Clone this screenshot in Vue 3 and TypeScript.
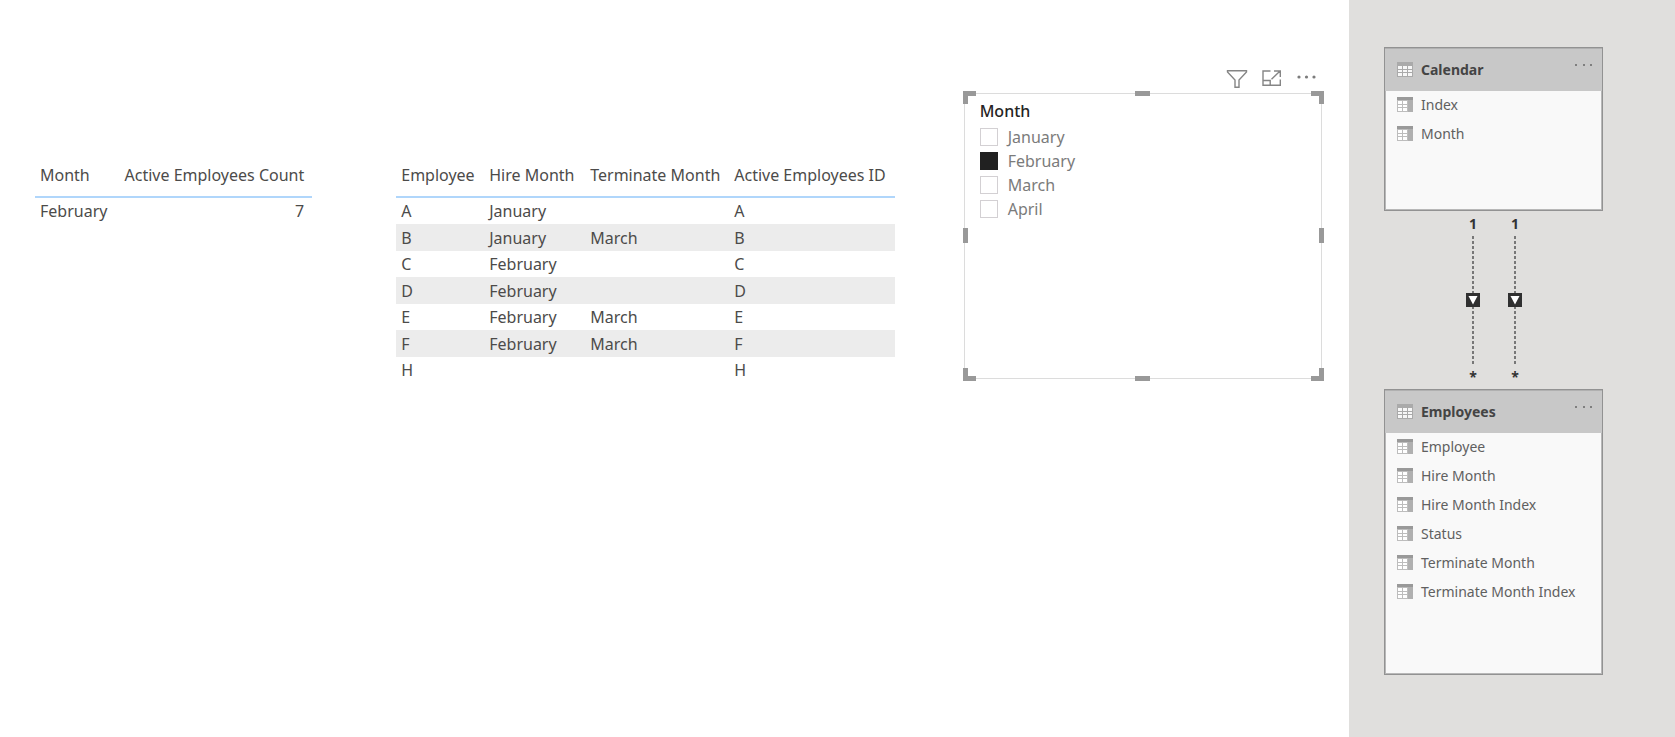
<script setup lang="ts">
import { ref } from 'vue'

interface EmployeeRow {
  employee: string
  hire: string
  terminate: string
  active: string
}

interface ModelTable {
  name: string
  fields: string[]
}

const rows: EmployeeRow[] = [
  { employee: 'A', hire: 'January', terminate: '', active: 'A' },
  { employee: 'B', hire: 'January', terminate: 'March', active: 'B' },
  { employee: 'C', hire: 'February', terminate: '', active: 'C' },
  { employee: 'D', hire: 'February', terminate: '', active: 'D' },
  { employee: 'E', hire: 'February', terminate: 'March', active: 'E' },
  { employee: 'F', hire: 'February', terminate: 'March', active: 'F' },
  { employee: 'H', hire: '', terminate: '', active: 'H' },
]

const months: string[] = ['January', 'February', 'March', 'April']
const selected = ref<string[]>(['February'])

const models: ModelTable[] = [
  { name: 'Calendar', fields: ['Index', 'Month'] },
  {
    name: 'Employees',
    fields: ['Employee', 'Hire Month', 'Hire Month Index', 'Status', 'Terminate Month', 'Terminate Month Index'],
  },
]

const handles: string[] = ['nw', 'n', 'ne', 'w', 'e', 'sw', 's', 'se']
</script>

<template>
  <div class="page">
    <main class="report">
      <section class="visual">
        <table class="grid summary">
          <colgroup>
            <col class="c-month" />
            <col />
          </colgroup>
          <thead>
            <tr>
              <th scope="col">Month</th>
              <th scope="col" class="num">Active Employees Count</th>
            </tr>
          </thead>
          <tbody>
            <tr>
              <td>February</td>
              <td class="num">7</td>
            </tr>
          </tbody>
        </table>
      </section>

      <section class="visual detail-visual">
        <table class="grid detail">
          <colgroup>
            <col class="c-employee" />
            <col class="c-hire" />
            <col class="c-term" />
            <col />
          </colgroup>
          <thead>
            <tr>
              <th scope="col">Employee</th>
              <th scope="col">Hire Month</th>
              <th scope="col">Terminate Month</th>
              <th scope="col">Active Employees ID</th>
            </tr>
          </thead>
          <tbody>
            <tr v-for="row in rows" :key="row.employee">
              <td>{{ row.employee }}</td>
              <td>{{ row.hire }}</td>
              <td>{{ row.terminate }}</td>
              <td>{{ row.active }}</td>
            </tr>
          </tbody>
        </table>
      </section>

      <section class="slicer-visual">
        <div class="toolbar">
          <button type="button" aria-label="Filters">
            <svg width="22" height="20" viewBox="0 0 22 20" fill="none" stroke="#858585" stroke-width="1.4">
              <path d="M1.5 1.7H20.5V3L13 11V18.3H9V11L1.5 3Z" />
            </svg>
          </button>
          <button type="button" aria-label="Focus mode">
            <svg width="22" height="20" viewBox="0 0 22 20" fill="none" stroke="#858585" stroke-width="1.4">
              <path d="M9.5 2H2V16.3H19.3V10.5M2 11.5H9.2V16.3M10.5 10.3L18.8 2.2M13 2H19.3V8" />
            </svg>
          </button>
          <button type="button" aria-label="More options">
            <svg width="22" height="20" viewBox="0 0 22 20" fill="#7c7c7c">
              <circle cx="3" cy="8" r="1.6" />
              <circle cx="10.5" cy="8" r="1.6" />
              <circle cx="18" cy="8" r="1.6" />
            </svg>
          </button>
        </div>
        <div class="frame">
          <fieldset class="slicer">
            <legend>Month</legend>
            <label v-for="month in months" :key="month">
              <input v-model="selected" type="checkbox" :value="month" />
              <span>{{ month }}</span>
            </label>
          </fieldset>
          <span v-for="h in handles" :key="h" class="handle" :class="h"></span>
        </div>
      </section>
    </main>

    <aside class="model">
      <template v-for="(model, index) in models" :key="model.name">
        <div v-if="index > 0" class="relations">
          <div v-for="n in 2" :key="n" class="relation">
            <span class="one">1</span>
            <svg width="14" height="130" viewBox="0 0 14 130">
              <path d="M7 1V129" stroke="#777" stroke-width="2" stroke-dasharray="3 2" />
              <rect y="58" width="14" height="14" fill="#303030" />
              <path d="M2.5 61H11.5L7 69.5Z" fill="#fff" />
            </svg>
            <span class="many">*</span>
          </div>
        </div>
        <article class="card" :class="{ large: index > 0 }">
          <header>
            <svg class="ticon" width="16" height="15" viewBox="0 0 16 15">
              <rect width="16" height="15" fill="#aaa" />
              <path d="M1 4h4v3H1zM6 4h4v3H6zM11 4h4v3h-4zM1 8h4v2H1zM6 8h4v2H6zM11 8h4v2h-4zM1 11h4v3H1zM6 11h4v3H6zM11 11h4v3h-4z" fill="#f7f7f7" />
            </svg>
            <h2>{{ model.name }}</h2>
            <button type="button" :aria-label="'More options for ' + model.name">
              <svg width="20" height="6" viewBox="0 0 20 6" fill="#7f7f7f">
                <rect x="1" y="2" width="2" height="2" />
                <rect x="9" y="2" width="2" height="2" />
                <rect x="16" y="2" width="2" height="2" />
              </svg>
            </button>
          </header>
          <ul>
            <li v-for="field in model.fields" :key="field">
              <svg class="ticon" width="16" height="15" viewBox="0 0 16 15">
                <rect width="16" height="15" fill="#bdbdbd" />
                <rect width="16" height="3" fill="#999" />
                <path d="M11 3h5v12h-5z" fill="#b0b0b0" />
                <path d="M1 4h4v3H1zM6 4h4v3H6zM1 8h4v2H1zM6 8h4v2H6zM1 11h4v3H1zM6 11h4v3H6z" fill="#fff" />
              </svg>
              <span>{{ field }}</span>
            </li>
          </ul>
        </article>
      </template>
    </aside>
  </div>
</template>

<style>
body {
  margin: 0;
}
</style>

<style scoped>
.page {
  display: flex;
  min-height: 100vh;
  background: #fff;
  font-family: 'Noto Sans', 'Open Sans', sans-serif;
  font-size: 16px;
  color: #4c4b4a;
}

.report {
  flex: 1;
  display: grid;
  grid-template-columns: 277fr 514fr 361fr;
  column-gap: 68px;
  align-items: start;
  padding: 0 25px 0 35px;
  min-width: 0;
}

.visual {
  padding-top: 153px;
}

.detail-visual {
  padding-left: 16px;
}

.grid {
  width: 100%;
  table-layout: fixed;
  border-collapse: collapse;
  line-height: 22px;
  white-space: nowrap;
}

.grid th {
  height: 43px;
  padding: 0 5px;
  border-bottom: 2px solid #b0d6fb;
  font-weight: 400;
  text-align: left;
}

.grid td {
  height: 26px;
  padding: 0 5px;
}

.grid .num {
  padding-right: 8px;
  text-align: right;
}

.detail tbody tr:nth-child(even) {
  background: #ececec;
}

.detail tbody tr:nth-child(even) td {
  height: 27px;
}

.c-month {
  width: 28%;
}

.c-employee {
  width: 88px;
}

.c-hire {
  width: 101px;
}

.c-term {
  width: 144px;
}

.slicer-visual {
  padding-top: 69px;
}

.toolbar {
  display: flex;
  justify-content: flex-end;
  gap: 13px;
  height: 22px;
  padding-right: 6px;
}

button {
  padding: 0;
  border: 0;
  background: none;
  line-height: 0;
  cursor: pointer;
}

.toolbar button {
  height: 20px;
}

.frame {
  position: relative;
  padding: 2px 2px 2px 1px;
}

.slicer {
  min-height: 286px;
  margin: 0;
  padding: 7px 15px;
  border: 1px solid #dcdcdc;
  box-sizing: border-box;
  color: #7b7b7b;
}

.slicer legend {
  float: left;
  width: 100%;
  padding: 0 0 4px;
  line-height: 20px;
  font-weight: 500;
  color: #252423;
}

.slicer label {
  display: flex;
  clear: both;
  align-items: center;
  gap: 10px;
  height: 24px;
  line-height: 24px;
}

.slicer input {
  appearance: none;
  width: 18px;
  height: 18px;
  margin: 0;
  border: 1px solid #d3d0d3;
  background: #fff;
}

.slicer input:checked {
  border-color: #212121;
  background: #212121;
}

.handle {
  position: absolute;
  width: 13px;
  height: 13px;
  box-sizing: border-box;
  border: 0 solid #999;
}

.nw { left: 0; top: 0; border-width: 5px 0 0 5px; }
.ne { right: 0; top: 0; border-width: 5px 5px 0 0; }
.sw { left: 0; bottom: 0; border-width: 0 0 5px 5px; }
.se { right: 0; bottom: 0; border-width: 0 5px 5px 0; }

.n,
.s {
  left: calc(50% - 8px);
  width: 15px;
  height: 5px;
  background: #999;
}

.n { top: 0; }
.s { bottom: 0; }

.w,
.e {
  top: calc(50% - 8px);
  width: 5px;
  height: 15px;
  background: #999;
}

.w { left: 0; }
.e { right: 0; }

.model {
  flex: 0 0 326px;
  box-sizing: border-box;
  padding: 47px 72px 40px 35px;
  background: #e0dfdd;
  font-size: 14px;
}

.card {
  min-height: 164px;
  box-sizing: border-box;
  border: 1px solid #929292;
  box-shadow: inset 0 0 0 1px #b8b8b8;
  background: #f9f9f9;
}

.card.large {
  min-height: 286px;
}

.card header {
  display: flex;
  align-items: center;
  gap: 8px;
  height: 43px;
  padding: 0 8px 0 12px;
  background: #c8c8c8;
  box-shadow: inset 0 1px 0 #b0b0b0;
}

.card h2 {
  flex: 1;
  margin: 0;
  font-size: 14px;
  line-height: 20px;
  font-weight: 700;
  color: #444;
}

.card header button {
  align-self: flex-start;
  padding-top: 14px;
}

.card ul {
  margin: 0;
  padding: 0 12px;
  list-style: none;
}

.card li {
  display: flex;
  align-items: center;
  gap: 8px;
  height: 29px;
  line-height: 18px;
  padding-bottom: 2px;
  box-sizing: border-box;
  color: #606060;
  white-space: nowrap;
}

.ticon {
  flex: none;
}

.relations {
  display: flex;
  gap: 28px;
  height: 178px;
  padding-left: 82px;
}

.relation {
  display: flex;
  flex-direction: column;
  align-items: center;
  width: 14px;
  color: #333;
  font-weight: 700;
}

.one {
  height: 24px;
  line-height: 26px;
}

.many {
  height: 24px;
  line-height: 24px;
}
</style>
